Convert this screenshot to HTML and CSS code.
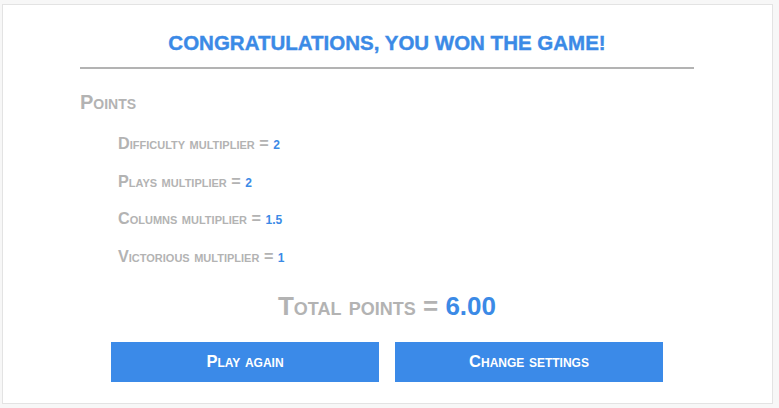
FILE: index.html
```html
<!DOCTYPE html>
<html lang="en">
<head>
<meta charset="utf-8">
<title>Game over</title>
<link rel="stylesheet" href="styles.css">
</head>
<body>
<main class="card">
  <h1 class="title">Congratulations, you won the game!</h1>
  <hr class="rule">
  <h2 class="points-heading">Points</h2>
  <ul class="multipliers">
    <li>Difficulty multiplier = <span class="val">2</span></li>
    <li>Plays multiplier = <span class="val">2</span></li>
    <li>Columns multiplier = <span class="val">1.5</span></li>
    <li>Victorious multiplier = <span class="val">1</span></li>
  </ul>
  <p class="total">Total points = <span class="val">6.00</span></p>
  <div class="actions">
    <button class="btn" type="button">Play again</button>
    <button class="btn" type="button">Change settings</button>
  </div>
</main>
</body>
</html>
```

FILE: styles.css
```css
html, body {
  margin: 0;
  padding: 0;
}
body {
  background: #f7f7f7;
  padding: 4px 6px 4px 2px;
  font-family: "Liberation Sans Narrow", "Liberation Sans", sans-serif;
  font-weight: bold;
  font-variant: small-caps;
  color: #b3b3b3;
}
.card {
  background: #fff;
  border: 1px solid #e3e3e3;
  height: 400px;
  box-sizing: border-box;
  padding: 23px 78px 0 77px;
  display: flex;
  flex-direction: column;
}
.title {
  margin: 0;
  font-size: 20.5px;
  line-height: 30px;
  text-align: center;
  text-transform: uppercase;
  color: #3b8ae6;
  -webkit-text-stroke: 0.4px #3b8ae6;
}
.rule {
  margin: 9px 0 0;
  border: 0;
  height: 2px;
  background: #b3b3b3;
}
.points-heading {
  margin: 21px 0 0;
  font-size: 20px;
  line-height: 24px;
}
.multipliers {
  list-style: none;
  margin: 19px 0 0;
  padding: 0 0 0 38px;
  display: flex;
  flex-direction: column;
  gap: 17.67px;
  font-size: 16.2px;
}
.multipliers li {
  height: 20px;
  line-height: 20px;
}
.multipliers .val {
  font-size: 12px;
  line-height: 1;
}
.val {
  color: #3b8ae6;
}
.total {
  margin: 25px 0 0;
  font-size: 26px;
  line-height: 30px;
  text-align: center;
}
.actions {
  margin-top: 21px;
  display: flex;
  justify-content: center;
  gap: 16px;
}
.btn {
  width: 268px;
  height: 40px;
  padding: 0;
  border: 0;
  background: #3b8ae8;
  color: #fff;
  font: inherit;
  font-size: 16.5px;
  font-variant: small-caps;
}
```
